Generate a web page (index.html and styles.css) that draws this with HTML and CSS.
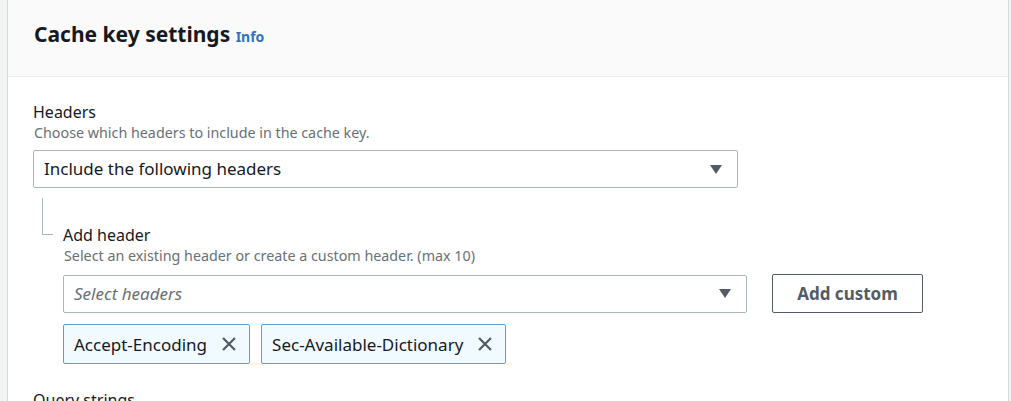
FILE: index.html
```html
<!DOCTYPE html>
<html>
<head>
<meta charset="utf-8">
<link rel="stylesheet" href="styles.css">
</head>
<body>
<div class="page">
  <div class="card">
    <div class="card-header">
      <h2 class="title">Cache key settings <a class="info" href="#">Info</a></h2>
    </div>
    <div class="card-body">
      <div class="field">
        <div class="label">Headers</div>
        <div class="desc">Choose which headers to include in the cache key.</div>
        <div class="select select-main">
          <span class="select-text">Include the following headers</span>
          <span class="caret"></span>
        </div>
      </div>
      <div class="subgroup">
        <div class="connector"></div>
        <div class="subcontent">
          <div class="label">Add header</div>
          <div class="desc">Select an existing header or create a custom header. (max 10)</div>
          <div class="row">
            <div class="select select-sub">
              <span class="select-text placeholder">Select headers</span>
              <span class="caret"></span>
            </div>
            <button class="btn">Add custom</button>
          </div>
          <div class="tokens">
            <div class="token">
              <span>Accept-Encoding</span>
              <svg class="x" width="16" height="16" viewBox="0 0 16 16"><path d="M2 2 L14 14 M14 2 L2 14" stroke="#545b64" stroke-width="2.2" fill="none"/></svg>
            </div>
            <div class="token">
              <span>Sec-Available-Dictionary</span>
              <svg class="x" width="16" height="16" viewBox="0 0 16 16"><path d="M2 2 L14 14 M14 2 L2 14" stroke="#545b64" stroke-width="2.2" fill="none"/></svg>
            </div>
          </div>
        </div>
      </div>
      <div class="field next">
        <div class="label">Query strings</div>
      </div>
    </div>
  </div>
</div>
</body>
</html>
```

FILE: styles.css
```css
* { box-sizing: border-box; }
html, body {
  margin: 0;
  padding: 0;
  background: #f2f3f3;
  font-family: "Noto Sans", "Open Sans", sans-serif;
  color: #16191f;
  overflow: hidden;
}
.page {
  padding: 0 2px 0 7px;
  height: 401px;
}
.card {
  background: #fff;
  border-left: 1px solid #d5dbdb;
  border-right: 1px solid #d5dbdb;
  height: 100%;
}
.card-header {
  background: #fafafa;
  border-bottom: 1px solid #eaeded;
  padding: 20px 26px 0 26px;
  height: 77px;
}
.title {
  margin: 0;
  font-size: 21px;
  line-height: 28px;
  font-weight: 700;
  color: #16191f;
}
.info {
  font-size: 14px;
  font-weight: 700;
  color: #2f72c0;
  text-decoration: none;
  margin-left: 0;
}
.card-body {
  padding: 24px 26px 0 25px;
}
.label {
  font-size: 16px;
  line-height: 22px;
  color: #16191f;
}
.desc {
  font-size: 14.3px;
  line-height: 20px;
  color: #687078;
  margin-top: 0;
  padding-left: 1px;
}
.select {
  display: flex;
  align-items: center;
  justify-content: space-between;
  height: 38px;
  border: 1px solid #aab7b8;
  border-radius: 2px;
  padding: 0 15px 0 10px;
  background: #fff;
}
.select-main {
  width: 705px;
  margin-top: 7px;
}
.select-text {
  font-size: 17px;
  line-height: 22px;
  color: #16191f;
}
.placeholder {
  font-style: italic;
  color: #687078;
}
.caret {
  width: 0;
  height: 0;
  border-left: 6px solid transparent;
  border-right: 6px solid transparent;
  border-top: 9px solid #545b64;
}
.subgroup {
  display: flex;
  margin-top: 10px;
}
.connector {
  width: 11px;
  height: 37px;
  margin-left: 9px;
  border-left: 1px solid #aab7b8;
  border-bottom: 1px solid #aab7b8;
  flex: none;
}
.subcontent {
  padding-top: 26px;
  margin-left: 10px;
}
.row {
  display: flex;
  align-items: center;
  gap: 25px;
  margin-top: 8px;
}
.select-sub {
  width: 684px;
}
.btn {
  height: 39px;
  width: 151px;
  border: 1px solid #545b64;
  border-radius: 2px;
  background: #fff;
  color: #545b64;
  font-family: "Noto Sans", "Open Sans", sans-serif;
  font-size: 17px;
  font-weight: 700;
  padding: 0;
}
.tokens {
  display: flex;
  gap: 11px;
  margin-top: 11px;
}
.token {
  display: flex;
  align-items: center;
  gap: 14px;
  height: 40px;
  padding: 0 12px 0 10px;
  background: #f1faff;
  border: 1px solid #5a9fd4;
  border-radius: 2px;
  font-size: 17px;
  color: #16191f;
}
.x { flex: none; }
.next {
  margin-top: 25px;
}
```
